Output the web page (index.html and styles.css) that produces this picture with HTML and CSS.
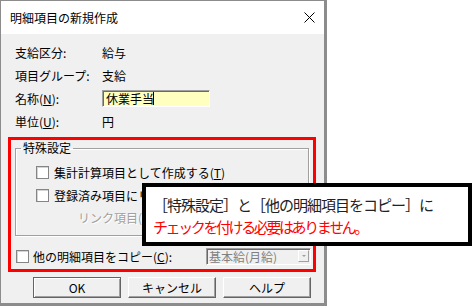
FILE: index.html
```html
<!DOCTYPE html>
<html>
<head>
  <meta charset="utf-8">
  <link rel="stylesheet" href="styles.css">
</head>
<body>
  <div class="page">
    <div class="dialog">
      <div class="titlebar">
        <span class="title">明細項目の新規作成</span>
        <svg class="close" width="11" height="11" viewBox="0 0 11 11">
          <path d="M0.5 0.5 L10.5 10.5 M10.5 0.5 L0.5 10.5" stroke="#000" stroke-width="1" fill="none"/>
        </svg>
      </div>

      <div class="content">
        <div class="fields">
          <span>支給区分:</span><span>給与</span>
          <span>項目グループ:</span><span>支給</span>
          <span>名称(<u>N</u>):</span><span class="input">休業手当<span class="caret"></span></span>
          <span>単位(<u>U</u>):</span><span>円</span>
        </div>

        <div class="highlight">
          <fieldset class="group">
            <legend>特殊設定</legend>
            <div class="check-row"><span class="checkbox"></span><span>集計計算項目として作成する(<u>T</u>)</span></div>
            <!-- rest of this label sits under the callout -->
            <div class="check-row"><span class="checkbox"></span><span>登録済み項目にリ</span></div>
            <div class="link-row">
              <span class="disabled">リンク項目(<u>I</u>):</span>
            </div>
          </fieldset>

          <div class="copy-row">
            <span class="checkbox"></span>
            <span>他の明細項目をコピー(<u>C</u>):</span>
            <span class="combo"><span>基本給(月給)</span><span class="combo-btn"></span></span>
          </div>
        </div>

        <div class="buttons">
          <div class="btn btn-default">OK</div>
          <div class="btn">キャンセル</div>
          <div class="btn">ヘルプ</div>
        </div>
      </div>
    </div>

    <!-- annotation over the dialog -->
    <div class="callout">
      <div class="callout-line">［特殊設定］と［他の明細項目をコピー］に</div>
      <div class="callout-line red">チェックを付ける必要はありません。</div>
    </div>
  </div>
</body>
</html>
```

FILE: styles.css
```css
/* Base */
body {
  margin: 0;
  background: #fff;
  font-family: "Noto Sans CJK JP", sans-serif;
  font-size: 12px;
  color: #000;
}

.page {
  position: relative;
  width: 472px;
  height: 306px;
}

/* Dialog window */
.dialog {
  width: 327px;
  height: 306px;
  box-sizing: border-box;
  border-left: 1px solid #8c8c8c;
  border-top: 1px solid #8c8c8c;
  border-right: 3px solid #8c8c8c;
  border-bottom: 3px solid #8c8c8c;
  background: #f0f0f0;
  display: flex;
  flex-direction: column;
}

.titlebar {
  height: 33px;
  flex-shrink: 0;
  background: #fff;
  display: flex;
  align-items: center;
  justify-content: space-between;
  padding: 0 9px 0 9px;
}

.title {
  font-size: 12px;
}

.content {
  padding: 7px 0 0 7px;
}

/* Label rows */
.fields {
  margin-left: 7px;
  display: grid;
  grid-template-columns: 87px auto;
  grid-auto-rows: 23px;
  align-items: center;
}

.input {
  width: 108px;
  height: 17px;
  box-sizing: border-box;
  background: #ffffc0;
  border: 1px solid;
  border-color: #a0a0a0 #fff #fff #a0a0a0;
  box-shadow: inset 1px 1px 0 #696969;
  padding-left: 3px;
  display: flex;
  align-items: center;
  line-height: 15px;
}

.caret {
  display: inline-block;
  width: 1px;
  height: 13px;
  background: #000;
  margin-left: -1px;
}

/* Red highlight frame */
.highlight {
  width: 308px;
  box-sizing: border-box;
  margin-top: 4px;
  border: 3px solid #ff0000;
}

.group {
  margin: 0 4px;
  padding: 0 0 7px 0;
  border: 1px solid #a0a0a0;
  box-shadow: inset 1px 1px 0 #fff, 1px 1px 0 #fff;
}

.group legend {
  margin-left: 5px;
  padding: 0 2px;
  line-height: 16px;
}

.check-row {
  height: 23px;
  display: flex;
  align-items: center;
  gap: 5px;
  padding-left: 20px;
}

.check-row:first-of-type {
  margin-top: 5px;
}

.checkbox {
  width: 13px;
  height: 13px;
  box-sizing: border-box;
  background: #fff;
  border: 1px solid #858585;
  box-shadow: inset 1px 1px 0 #d4d4d4;
  flex-shrink: 0;
}

.link-row {
  height: 21px;
  display: flex;
  align-items: center;
  padding-left: 62px;
}

.disabled {
  color: #a0a0a0;
  text-shadow: 1px 1px 0 #fff;
}

.combo {
  width: 105px;
  height: 17px;
  box-sizing: border-box;
  background: #f0f0f0;
  border: 1px solid;
  border-color: #a0a0a0 #fff #fff #a0a0a0;
  box-shadow: inset 1px 1px 0 #696969;
  color: #808080;
  padding-left: 2px;
  display: flex;
  align-items: center;
  justify-content: space-between;
  line-height: 15px;
}

.combo-btn {
  width: 11px;
  height: 12px;
  box-sizing: border-box;
  margin-right: 1px;
  border: 1px solid;
  border-color: #fff #a0a0a0 #a0a0a0 #fff;
  display: flex;
  align-items: center;
  justify-content: center;
}

.combo-btn::after {
  content: '';
  border-left: 2px solid transparent;
  border-right: 2px solid transparent;
  border-top: 2px solid #a0a0a0;
}

.copy-row {
  height: 22px;
  margin: 9px 0 2px 0;
  padding: 0 2px 0 5px;
  display: flex;
  align-items: center;
  gap: 4px;
}

.copy-row .combo {
  margin-left: auto;
}

/* Buttons */
.buttons {
  display: flex;
  gap: 7px;
  margin: 5px 0 0 25px;
}

.btn {
  width: 88px;
  height: 21px;
  box-sizing: border-box;
  border: 1px solid;
  border-color: #fff #646464 #646464 #fff;
  box-shadow: inset -1px -1px 0 #a0a0a0;
  background: #f0f0f0;
  display: flex;
  align-items: center;
  justify-content: center;
}

.btn-default {
  border-color: #646464;
  box-shadow: inset 1px 1px 0 #fff, inset -1px -1px 0 #a0a0a0;
}

/* Annotation callout */
.callout {
  position: absolute;
  left: 142px;
  top: 183px;
  width: 330px;
  height: 63px;
  box-sizing: border-box;
  border: 4px solid #000;
  background: #fff;
  padding: 7px 0 0 7px;
  font-size: 15px;
  line-height: 22px;
  color: #222;
}

.callout-line {
  letter-spacing: -1px;
  white-space: nowrap;
}

.callout-line.red {
  color: #ff0000;
  letter-spacing: -2.4px;
}
```
